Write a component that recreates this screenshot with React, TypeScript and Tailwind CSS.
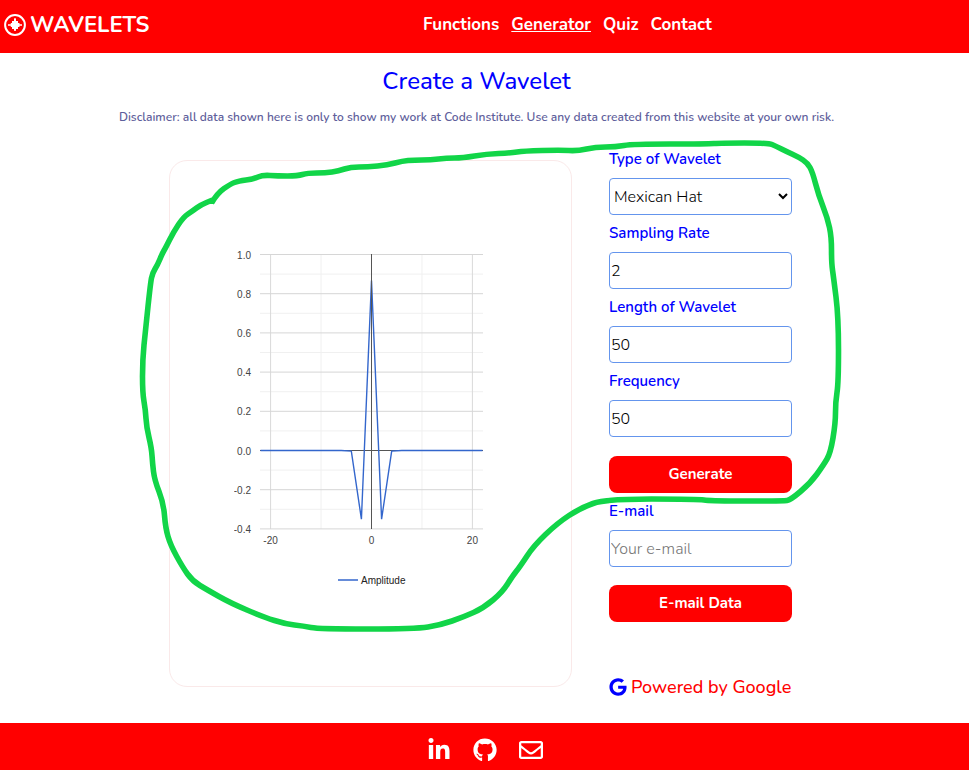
import { FaGithub, FaGoogle, FaLinkedinIn, FaRegEnvelope } from "react-icons/fa";

const links = ["Functions", "Generator", "Quiz", "Contact"];

const parameters = [
  { id: "rate", label: "Sampling Rate", value: "2" },
  { id: "length", label: "Length of Wavelet", value: "50" },
  { id: "frequency", label: "Frequency", value: "50" },
];

const fieldClass = "block h-[37px] w-full rounded border border-[#6495ed] bg-white text-base font-light text-black";
const labelClass = "block h-[37px] text-[15px] leading-[37px] font-semibold text-[#0000ff]";
const buttonClass = "block h-[37px] w-full rounded-lg bg-[#ff0000] text-[15px] font-bold text-white";

const ticks = [1, 0.8, 0.6, 0.4, 0.2, 0, -0.2, -0.4];
const minorTicks = [0.9, 0.7, 0.5, 0.3, 0.1, -0.1, -0.3];
const samples = [
  [-22, 0], [-6, 0], [-4, -0.003], [-2, -0.35], [0, 0.867],
  [2, -0.35], [4, -0.003], [6, 0], [22, 0],
];
const toX = (v: number) => 137.5 + v * 5.045;
const toY = (v: number) => 215.5 - v * 196;

const outline = [
  [211, 203], [217, 193], [230, 184], [238, 181], [253, 179], [262, 175], [277, 176], [297, 176],
  [307, 173], [325, 173], [338, 171], [350, 167], [367, 167], [387, 165], [402, 161], [413, 160],
  [430, 160], [446, 158], [462, 158], [486, 154], [510, 153], [523, 151], [560, 150], [577, 151],
  [595, 147], [615, 147], [632, 144], [707, 144], [720, 143], [768, 143], [775, 146], [787, 152],
  [798, 157], [807, 163], [812, 172], [818, 195], [827, 218], [831, 237], [831, 263], [833, 277],
  [838, 317], [838, 383], [835, 402], [835, 423], [830, 453], [823, 465], [810, 483], [790, 500],
  [783, 501], [710, 501], [697, 499], [605, 499], [580, 508], [557, 523], [533, 546], [520, 566],
  [512, 576], [502, 592], [483, 608], [463, 617], [440, 625], [415, 629], [318, 629], [303, 626],
  [285, 624], [263, 617], [230, 603], [207, 590], [192, 581], [182, 567], [170, 545], [165, 528],
  [163, 503], [154, 480], [152, 463], [151, 448], [146, 427], [145, 410], [142, 393], [142, 360],
  [145, 330], [150, 283], [152, 273], [157, 265], [162, 253], [165, 248], [173, 232], [183, 217],
  [192, 211], [200, 205], [212, 200],
];

// Rounds the corners of a hand-drawn line by curving through segment midpoints.
function smoothPath(points: number[][]) {
  const curves = points.slice(1, -1).map(([x, y], i) => {
    const [nextX, nextY] = points[i + 2];
    return `Q${x} ${y} ${(x + nextX) / 2} ${(y + nextY) / 2}`;
  });
  return `M${points[0].join(" ")}${curves.join("")}L${points[points.length - 1].join(" ")}`;
}

function Logo() {
  return (
    <svg width="22" height="22" viewBox="0 0 22 22" fill="none" stroke="white" aria-hidden="true">
      <circle cx="11" cy="11" r="9.9" strokeWidth="2" />
      <path d="M4 11h14M11 4v13" strokeWidth="1.300" />
      <path d="M10 5h2v2h2v2h1.500v4H14v2h-2v1.500h-2V15H8v-2H6.800V9H8V7h2Z" fill="white" stroke="none" />
    </svg>
  );
}

function Chart() {
  return (
    <svg className="w-full" viewBox="0 0 273 360" fontFamily="Liberation Sans, sans-serif" fontSize="10" role="img" aria-label="Amplitude chart">
      {minorTicks.map((v) => (
        <path key={v} d={`M26 ${toY(v)}H249`} stroke="#f0f0f0" />
      ))}
      {[-10, 10].map((v) => (
        <path key={v} d={`M${toX(v)} 20V294`} stroke="#f0f0f0" />
      ))}
      {[-20, 20].map((v) => (
        <path key={v} d={`M${toX(v)} 20V294`} stroke="#d9d9d9" />
      ))}
      {ticks.map((v) => (
        <g key={v}>
          <path d={`M26 ${toY(v)}H249`} stroke={v === 0 ? "#555" : "#d6d6d6"} />
          <text x="17" y={toY(v) + 4} textAnchor="end" fill="#444">{v.toFixed(1)}</text>
        </g>
      ))}
      <polyline points={samples.map(([x, y]) => `${toX(x)},${toY(y)}`).join(" ")} fill="none" stroke="#3366cc" strokeWidth="1.4" />
      <path d={`M${toX(0)} 19V294`} stroke="#555" />
      {[-20, 0, 20].map((v) => (
        <text key={v} x={toX(v)} y="309" textAnchor="middle" fill="#444">{v}</text>
      ))}
      <path d="M104 345h20" stroke="#3366cc" strokeWidth="1.500" />
      <text x="127" y="349" fill="#222">Amplitude</text>
    </svg>
  );
}

function Highlight() {
  return (
    <svg className="pointer-events-none absolute top-0 left-1/2 -translate-x-1/2" width="969" height="770" viewBox="0 0 969 770" fill="none" aria-hidden="true">
      <path d={smoothPath(outline)} stroke="#11d548" strokeWidth="5.600" strokeLinejoin="round" />
    </svg>
  );
}

export default function App() {
  return (
    <div className="relative flex min-h-screen flex-col overflow-hidden bg-white font-[Nunito,Lato,sans-serif]">
      <header className="grid h-[53px] shrink-0 grid-cols-[419px_1fr] items-center bg-[#ff0000] pb-[3px] text-white">
        <a href="#home" className="flex items-center gap-1 pl-1 text-[22px] font-bold">
          <Logo />
          WAVELETS
        </a>
        <nav className="flex gap-3 pl-1 text-[17px] font-bold">
          {links.map((link) => (
            <a key={link} href={`#${link}`} className={link === "Generator" ? "underline" : ""}>
              {link}
            </a>
          ))}
        </nav>
      </header>

      <main className="flex-1">
        <div className="pr-4 text-center">
          <h1 className="pt-3 text-2xl leading-8 font-medium text-[#0000ff]">Create a Wavelet</h1>
          <p className="pt-3 text-xs leading-4 font-semibold text-[#5f5f9c]">
            Disclaimer: all data shown here is only to show my work at Code Institute. Use any data created from this website at your own risk.
          </p>
        </div>

        <div className="mx-auto flex w-full max-w-[631px] gap-[37px] pt-4">
          <section className="mt-[19px] h-[527px] w-[403px] rounded-[18px] border border-[#fae9e9] px-16 pt-[74px]">
            <Chart />
          </section>

          <section className="w-[190px]">
            <form className="w-[183px]" onSubmit={(event) => event.preventDefault()}>
              <label htmlFor="type" className={labelClass}>Type of Wavelet</label>
              <select id="type" className={fieldClass}>
                <option>Mexican Hat</option>
              </select>
              {parameters.map(({ id, label, value }) => (
                <div key={id}>
                  <label htmlFor={id} className={labelClass}>{label}</label>
                  <input id={id} defaultValue={value} className={`${fieldClass} px-px`} />
                </div>
              ))}
              <button type="submit" className={`${buttonClass} mt-[19px]`}>Generate</button>
            </form>
            <form className="w-[183px]" onSubmit={(event) => event.preventDefault()}>
              <label htmlFor="email" className={labelClass}>E-mail</label>
              <input id="email" type="email" placeholder="Your e-mail" className={`${fieldClass} px-px placeholder:text-[#757575]`} />
              <button type="submit" className={`${buttonClass} mt-[18px]`}>E-mail Data</button>
            </form>
            <p className="flex items-center gap-1 pt-[51px] text-lg font-medium whitespace-nowrap text-[#ff0000]">
              <FaGoogle size={18} color="#0000ff" />
              Powered by Google
            </p>
          </section>
        </div>
      </main>

      <footer className="flex h-[47px] shrink-0 items-center justify-center gap-[22px] bg-[#ff0000] pt-[6px] text-white">
        <a href="#linkedin" aria-label="LinkedIn"><FaLinkedinIn size={24} /></a>
        <a href="#github" aria-label="GitHub"><FaGithub size={24} /></a>
        <a href="#mail" aria-label="E-mail"><FaRegEnvelope size={24} /></a>
      </footer>
      <Highlight />
    </div>
  );
}
